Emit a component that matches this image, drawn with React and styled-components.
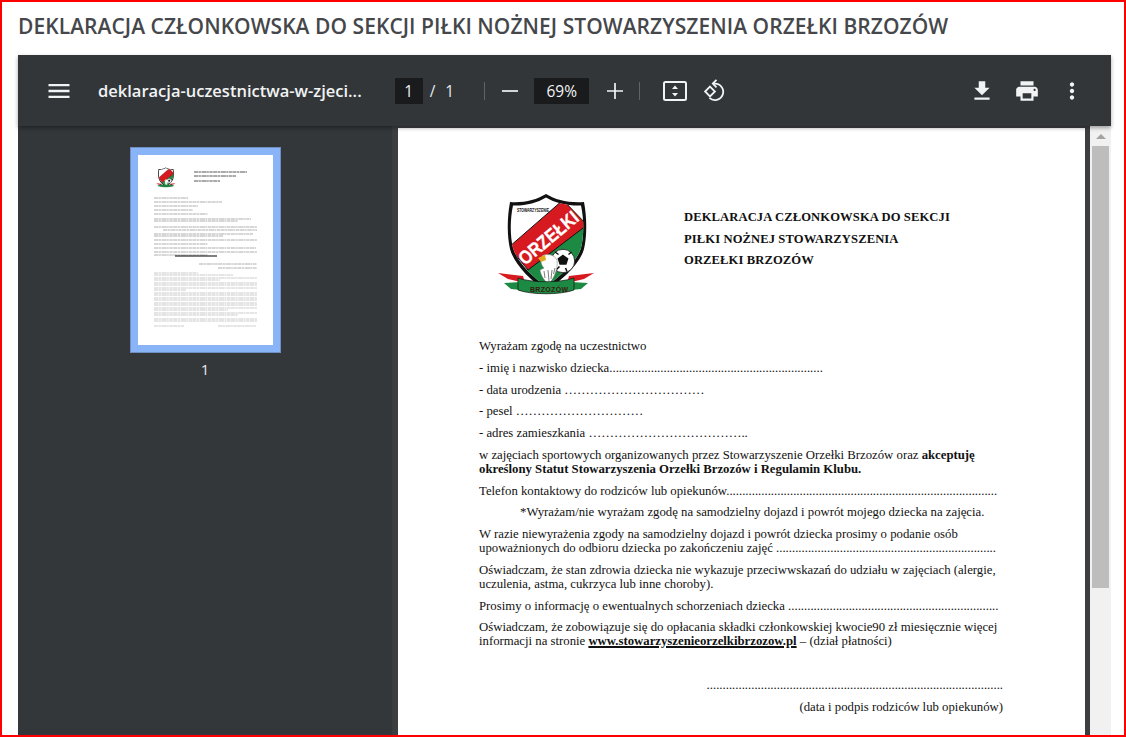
import React from 'react';
import styled, { createGlobalStyle } from 'styled-components';

const GlobalStyle = createGlobalStyle`
  html, body, #root { margin: 0; padding: 0; height: 100%; }
  body { background: #fff; overflow: hidden; font-family: "Open Sans", sans-serif; }
`;

const Frame = styled.div`
  box-sizing: border-box;
  height: 737px;
  border: 2px solid #f00;
  display: flex;
  flex-direction: column;
  padding: 0 13px 0 16px;
  overflow: hidden;
`;

const Title = styled.h1`
  margin: 0;
  height: 53px;
  line-height: 49px;
  font-family: "Open Sans", sans-serif;
  font-size: 21px;
  font-weight: 600;
  letter-spacing: 0.05px;
  color: #45474b;
  white-space: nowrap;
`;

const Viewer = styled.div`
  flex: 1;
  min-height: 0;
  display: flex;
  flex-direction: column;
  background: #3c3f42;
`;

const Toolbar = styled.div`
  position: relative;
  z-index: 2;
  flex: 0 0 71px;
  display: flex;
  align-items: center;
  background: #323639;
  box-shadow: 0 2px 4px rgba(0, 0, 0, 0.35);
  color: #f1f3f4;
  padding-left: 27px;
`;

const IconSlot = styled.div`
  flex: 0 0 ${(p) => p.$w || 24}px;
  margin-left: ${(p) => p.$ml || 0}px;
  display: flex;
  align-items: center;
  justify-content: center;
`;

const FileName = styled.div`
  flex: 0 0 263px;
  margin-left: 25px;
  font-size: 16.5px;
  font-weight: 600;
  color: #f1f3f4;
  white-space: nowrap;
`;

const NumBox = styled.div`
  flex: 0 0 ${(p) => p.$w}px;
  margin-left: ${(p) => p.$ml}px;
  height: 26px;
  line-height: 26px;
  text-align: center;
  background: #191b1c;
  color: #f1f3f4;
  font-size: 15.5px;
`;

const PageLabel = styled.div`
  margin-left: ${(p) => p.$ml}px;
  font-size: 15.5px;
  color: #e8eaed;
`;

const Separator = styled.div`
  flex: 0 0 1px;
  height: 18px;
  margin-left: ${(p) => p.$ml}px;
  background: #5f6368;
`;

const RightTools = styled.div`
  margin-left: auto;
  display: flex;
  align-items: center;
  padding-right: 26px;
`;

const Body = styled.div`
  flex: 1;
  min-height: 0;
  display: flex;
`;

const Sidebar = styled.aside`
  flex: 0 0 375px;
  background: #33373a;
  box-shadow: inset -1px 0 0 #3a3d40;
  display: flex;
  flex-direction: column;
  align-items: center;
  padding: 21px 0 0 0;
  box-sizing: border-box;
`;

const Thumb = styled.div`
  width: 135px;
  height: 190px;
  background: #fff;
  border: 8px solid #8ab4f8;
  outline: 1px solid #6f8fc4;
  outline-offset: -1px;
  margin-left: -1px;
`;

const ThumbNumber = styled.div`
  margin: 6px 0 0 -1px;
  color: #e8eaed;
  font-size: 15px;
`;

const Stage = styled.main`
  flex: 1;
  min-width: 0;
  display: flex;
  padding: 2px 5px 0 5px;
  overflow: hidden;
`;

const Page = styled.section`
  flex: 1;
  min-width: 0;
  background: #fff;
  padding: 64px 0 0 81px;
  box-sizing: border-box;
  height: 760px;
  font-family: "Liberation Serif", serif;
  font-size: 12.75px;
  color: #111;
`;

const DocHeader = styled.header`
  display: flex;
  align-items: flex-start;
  height: 103px;
  margin-bottom: 44px;
  padding-left: 18px;
`;

const DocHeading = styled.h2`
  margin: 15px 0 0 89px;
  font-size: 12.6px;
  line-height: 21.5px;
  font-weight: 700;
  letter-spacing: 0.1px;
  white-space: nowrap;
`;

const Para = styled.p`
  margin: 0 0 ${(p) => p.$gap || 7.75}px ${(p) => p.$indent || 0}px;
  line-height: 14px;
  white-space: nowrap;
  text-align: ${(p) => p.$align || 'left'};
  padding-right: ${(p) => (p.$align === 'right' ? 82 : 0)}px;
`;

const Site = styled.a`
  font-weight: 700;
  color: #111;
  text-decoration: underline;
  text-decoration-thickness: 2px;
`;

const Scrollbar = styled.div`
  flex: 0 0 21px;
  background: #f1f1f1;
  display: flex;
  flex-direction: column;
  align-items: center;
`;

const ScrollArrow = styled.div`
  height: 20px;
  width: 100%;
  display: flex;
  align-items: center;
  justify-content: center;
  &::before {
    content: '';
    border-left: 5px solid transparent;
    border-right: 5px solid transparent;
    border-bottom: 5px solid #a3a3a3;
  }
`;

const ScrollThumb = styled.div`
  width: 17px;
  height: 442px;
  background: #bdbdbd;
`;

const dots = (n) => '.'.repeat(n);
const ell = (n) => '…'.repeat(n);

const MenuIcon = () => (
  <svg width="28" height="28" viewBox="0 0 24 24" fill="#f1f3f4">
    <path d="M3 18h18v-2H3v2zm0-5h18v-2H3v2zm0-7v2h18V6H3z" />
  </svg>
);

const MinusIcon = () => (
  <svg width="24" height="24" viewBox="0 0 24 24" stroke="#f1f3f4" strokeWidth="1.7">
    <path d="M4 12h16" />
  </svg>
);

const PlusIcon = () => (
  <svg width="24" height="24" viewBox="0 0 24 24" stroke="#f1f3f4" strokeWidth="1.7">
    <path d="M4 12h16M12 4v16" />
  </svg>
);

const FitIcon = () => (
  <svg width="24" height="20" viewBox="0 0 24 20" fill="none">
    <rect x="1" y="1" width="22" height="18" rx="1.5" stroke="#f1f3f4" strokeWidth="2" />
    <path d="M12 4.5l3 3.5H9zM12 15.5l3-3.5H9z" fill="#f1f3f4" />
  </svg>
);

const RotateIcon = () => (
  <svg width="24" height="24" viewBox="0 0 24 24" fill="none" stroke="#f1f3f4" strokeWidth="1.8">
    <path d="M8 7.6l4.9 4.9L8 17.4l-4.9-4.9z" />
    <path d="M11.5 4.6h1.5a8.2 8.2 0 1 1-5.6 14.2" />
    <path d="M14.5 0.8L10.8 4.6l3.7 3.8" />
  </svg>
);

const DownloadIcon = () => (
  <svg width="26" height="26" viewBox="0 0 24 24" fill="#f1f3f4">
    <path d="M19 9h-4V3H9v6H5l7 7 7-7zM5 18v2h14v-2H5z" />
  </svg>
);

const PrintIcon = () => (
  <svg width="26" height="26" viewBox="0 0 24 24" fill="#f1f3f4">
    <path d="M19 8H5c-1.66 0-3 1.34-3 3v6h4v4h12v-4h4v-6c0-1.66-1.34-3-3-3zm-3 11H8v-5h8v5zm3-7c-.55 0-1-.45-1-1s.45-1 1-1 1 .45 1 1-.45 1-1 1zm-1-9H6v4h12V3z" />
  </svg>
);

const MoreIcon = () => (
  <svg width="26" height="26" viewBox="0 0 24 24" fill="#f1f3f4">
    <path d="M12 8c1.1 0 2-.9 2-2s-.9-2-2-2-2 .9-2 2 .9 2 2 2zm0 2c-1.1 0-2 .9-2 2s.9 2 2 2 2-.9 2-2-.9-2-2-2zm0 6c-1.1 0-2 .9-2 2s.9 2 2 2 2-.9 2-2-.9-2-2-2z" />
  </svg>
);

// herb klubu, uklad 0-98 x 0-103
const Crest = ({ withText = true }) => (
  <svg width="98" height="103" viewBox="0 0 98 103" style={{ flex: '0 0 98px' }}>
    <defs>
      <clipPath id="crest-inner">
        <path d="M49 5.5 C40 11 28 14 16 13.5 C13 27 13 44 16 56 C20 70 35 84 49 95 C63 84 80 70 84 56 C87 44 87 27 84 13.5 C71 14 58 11 49 5.5 Z" />
      </clipPath>
    </defs>
    <path d="M1 81 L26 84 L28 91 L11 87 Z M97 81 L72 84 L70 91 L87 87 Z" fill="#d71920" />
    <path d="M7 91 L24 90 L24 98 L14 97 Z M91 91 L74 90 L74 98 L84 97 Z" fill="#1d8a44" />
    <path d="M49 2 C39 8 27 11 13 10 C10 26 10 44 13 57 C17 72 33 88 49 99 C65 88 83 72 87 57 C90 44 90 26 87 10 C71 11 59 8 49 2 Z" fill="#111" />
    <g clipPath="url(#crest-inner)">
      <rect x="10" y="0" width="80" height="100" fill="#fff" />
      <path d="M88 29 L92 100 L15 100 L30 77 Z" fill="#1d8a44" />
      <path d="M12 55 L66 8 L90 33 L31 78 Z" fill="#d71920" stroke="#111" strokeWidth="1" />
    </g>
    <circle cx="66" cy="69" r="11.7" fill="#fff" stroke="#111" strokeWidth="0.8" />
    <path d="M66 63.5l4.6 3.2-1.7 5.3h-5.8l-1.7-5.3zM58 60l3.5 2.5M74.5 60l-3 2.5M70 79.5l-1.5-3.5M59.5 77.5l3-3M55.5 68l2.5 1" fill="#111" stroke="#111" strokeWidth="1.5" />
    <path d="M45 64 C50 61 58 63 60 68 C61 76 58 85 52 92 C48 90 44 84 43 78 L47 76 C44 73 43 69 45 64 Z" fill="#fff" stroke="#777" strokeWidth="0.5" />
    <path d="M47 79l1 7M51 78l1 11M55 78l-1 9M58 76l-1.5 6" stroke="#444" strokeWidth="0.7" fill="none" />
    <path d="M41 66 L48 63 L49 68 L44 70 Z" fill="#e2a91f" />
    <path d="M21 86 C35 91 63 91 77 86 L77 98 C63 103 35 103 21 98 Z" fill="#1d8a44" stroke="#111" strokeWidth="0.7" />
    {withText && (
      <>
        <text x="20" y="20" fontFamily="Liberation Sans, sans-serif" fontSize="5" fontWeight="700" fill="#111" textLength="32" lengthAdjust="spacingAndGlyphs">STOWARZYSZENIE</text>
        <text x="0" y="0" transform="translate(28 74) rotate(-40)" fontFamily="Liberation Sans, sans-serif" fontSize="19" fontWeight="700" fill="#fff" stroke="#fff" strokeWidth="0.3" textLength="72" lengthAdjust="spacingAndGlyphs">ORZEŁKI</text>
        <text x="33" y="99.5" fontFamily="Liberation Sans, sans-serif" fontSize="7" fontWeight="700" fill="#3a1a10" textLength="38" lengthAdjust="spacing">BRZOZÓW</text>
      </>
    )}
  </svg>
);

// miniatura strony: kreski zamiast tekstu
const headLines = [[56, 17, 109], [56, 21, 98], [56, 26, 82]];
const bodyLines = [
  [16, 43, 50], [16, 47, 84], [16, 51, 60], [16, 55, 55], [16, 59, 70],
  [16, 64, 113], [16, 66, 100], [16, 72, 119], [25, 75, 119], [16, 79, 115], [16, 81, 85],
  [16, 85, 119], [16, 89, 70], [16, 93, 118], [16, 97, 119], [16, 100, 70],
  [61, 109, 119], [80, 113, 119],
];
const smallLines = [
  [16, 118, 60], [16, 120, 95], [16, 123, 119], [16, 125, 82], [16, 128, 119], [16, 130, 119],
  [16, 133, 119], [16, 135, 48], [16, 138, 119], [16, 140, 119], [16, 143, 119], [16, 145, 119],
  [16, 148, 119], [16, 150, 119], [16, 153, 119], [16, 155, 90], [16, 158, 119], [16, 160, 100],
  [16, 164, 119], [16, 166, 119], [16, 171, 46], [80, 171, 118],
];

const ThumbRows = ({ rows, color, width }) =>
  rows.map(([x1, y, x2]) => (
    <line
      key={`${x1}-${y}`}
      x1={x1}
      x2={x2}
      y1={y}
      y2={y}
      stroke={color}
      strokeWidth={width}
      strokeDasharray="4.1 0.5 2.3 0.6 5.2 0.4 1.7 0.6 3.3 0.5"
    />
  ));

const ThumbPage = () => (
  <svg width="135" height="190" viewBox="0 0 135 190">
    <ThumbRows rows={headLines} color="#555" width="1" />
    <ThumbRows rows={bodyLines} color="#9a9a9a" width="0.8" />
    <ThumbRows rows={smallLines} color="#bcbcbc" width="0.8" />
    <rect x="37" y="100.5" width="42" height="1" fill="#000" />
    <g transform="translate(18 12) scale(0.2)">
      <Crest withText={false} />
    </g>
  </svg>
);

const App = () => (
  <>
    <GlobalStyle />
    <Frame>
      <Title>DEKLARACJA CZŁONKOWSKA DO SEKCJI PIŁKI NOŻNEJ STOWARZYSZENIA ORZEŁKI BRZOZÓW</Title>
      <Viewer>
        <Toolbar>
          <IconSlot $w={28}><MenuIcon /></IconSlot>
          <FileName>deklaracja-uczestnictwa-w-zjeci...</FileName>
          <NumBox $w={28} $ml={33}>1</NumBox>
          <PageLabel $ml={7}>/</PageLabel>
          <PageLabel $ml={10}>1</PageLabel>
          <Separator $ml={30} />
          <IconSlot $ml={13}><MinusIcon /></IconSlot>
          <NumBox $w={55} $ml={12}>69%</NumBox>
          <IconSlot $ml={14}><PlusIcon /></IconSlot>
          <Separator $ml={12} />
          <IconSlot $ml={23}><FitIcon /></IconSlot>
          <IconSlot $ml={15}><RotateIcon /></IconSlot>
          <RightTools>
            <IconSlot $w={26}><DownloadIcon /></IconSlot>
            <IconSlot $w={26} $ml={19}><PrintIcon /></IconSlot>
            <IconSlot $w={26} $ml={19}><MoreIcon /></IconSlot>
          </RightTools>
        </Toolbar>
        <Body>
          <Sidebar>
            <Thumb><ThumbPage /></Thumb>
            <ThumbNumber>1</ThumbNumber>
          </Sidebar>
          <Stage>
            <Page>
              <DocHeader>
                <Crest />
                <DocHeading>
                  DEKLARACJA CZŁONKOWSKA DO SEKCJI<br />
                  PIŁKI NOŻNEJ STOWARZYSZENIA<br />
                  ORZEŁKI BRZOZÓW
                </DocHeading>
              </DocHeader>
              <Para>Wyrażam zgodę na uczestnictwo</Para>
              <Para>- imię i nazwisko dziecka{dots(67)}</Para>
              <Para>- data urodzenia {ell(11)}</Para>
              <Para>- pesel {ell(10)}</Para>
              <Para>- adres zamieszkania {ell(12)}..</Para>
              <Para>
                w zajęciach sportowych organizowanych przez Stowarzyszenie Orzełki Brzozów oraz <b>akceptuję</b><br />
                <b>określony Statut Stowarzyszenia Orzełki Brzozów i Regulamin Klubu.</b>
              </Para>
              <Para>Telefon kontaktowy do rodziców lub opiekunów{dots(85)}</Para>
              <Para $indent={41}>*Wyrażam/nie wyrażam zgodę na samodzielny dojazd i powrót mojego dziecka na zajęcia.</Para>
              <Para>
                W razie niewyrażenia zgody na samodzielny dojazd i powrót dziecka prosimy o podanie osób<br />
                upoważnionych do odbioru dziecka po zakończeniu zajęć {dots(69)}
              </Para>
              <Para>
                Oświadczam, że stan zdrowia dziecka nie wykazuje przeciwwskazań do udziału w zajęciach (alergie,<br />
                uczulenia, astma, cukrzyca lub inne choroby).
              </Para>
              <Para>Prosimy o informację o ewentualnych schorzeniach dziecka {dots(66)}</Para>
              <Para $gap={30}>
                Oświadczam, że zobowiązuje się do opłacania składki członkowskiej kwocie90 zł miesięcznie więcej<br />
                informacji na stronie <Site>www.stowarzyszenieorzelkibrzozow.pl</Site> – (dział płatności)
              </Para>
              <Para $align="right">{dots(93)}</Para>
              <Para $align="right">(data i podpis rodziców lub opiekunów)</Para>
            </Page>
          </Stage>
          <Scrollbar>
            <ScrollArrow />
            <ScrollThumb />
          </Scrollbar>
        </Body>
      </Viewer>
    </Frame>
  </>
);

export default App;
